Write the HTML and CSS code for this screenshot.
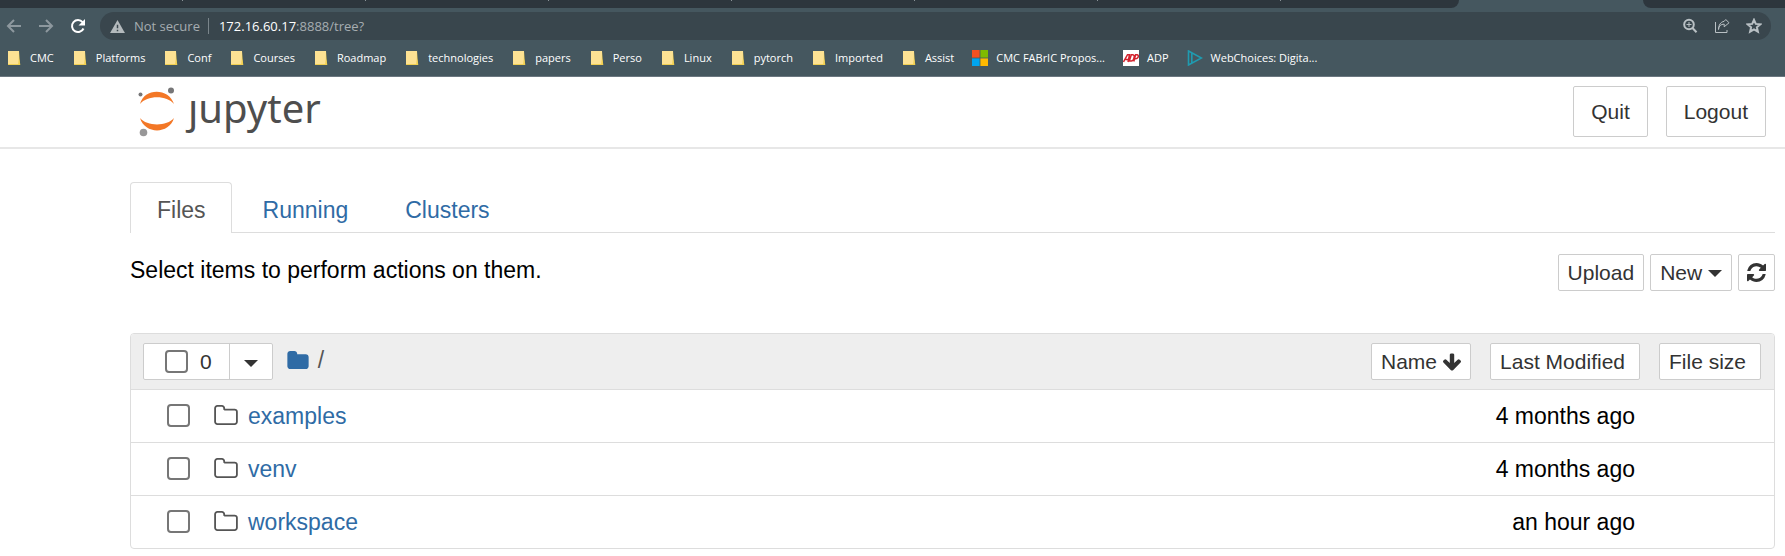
FILE: index.html
```html
<!DOCTYPE html>
<html lang="en">
<head>
<meta charset="utf-8">
<title>Home Page - Select or create a notebook</title>
<link rel="stylesheet" href="styles.css">
</head>
<body>
<svg class="defs" aria-hidden="true">
  <symbol id="mark" viewBox="0 0 16 16"><path fill="#fde293" d="M2 1h11v8l1 5.500H2z"/><path fill="#f0cf52" d="M2 14h12v1H2zM13 1l.6 8 .7 6H12l.8-6z"/></symbol>
  <symbol id="folder-o" viewBox="64 128 1664 1408"><path fill="currentColor" d="M1600 1312v-704q0-40-28-68t-68-28h-704q-40 0-68-28t-28-68v-64q0-40-28-68t-68-28h-320q-40 0-68 28t-28 68v960q0 40 28 68t68 28h1216q40 0 68-28t28-68zm128-704v704q0 92-66 158t-158 66h-1216q-92 0-158-66t-66-158v-960q0-92 66-158t158-66h320q92 0 158 66t66 158v32h672q92 0 158 66t66 158z"/></symbol>
</svg>

<div class="browser">
  <div class="tabstrip">
    <div class="tabs-left"><i></i><i></i><i></i><i></i><i></i><i></i><i></i></div>
    <div class="tabs-right"></div>
  </div>
  <div class="toolbar">
    <button class="nav dim" aria-label="Back"><svg viewBox="0 0 16 16"><path d="M15 8H2M8 2L2 8l6 6"/></svg></button>
    <button class="nav dim" aria-label="Forward"><svg viewBox="0 0 16 16"><path d="M1 8h13M8 2l6 6-6 6"/></svg></button>
    <button class="nav" aria-label="Reload"><svg viewBox="0 0 16 16"><path d="M13.500 10.500A6 6 0 1 1 12.600 4.200"/><path class="solid" d="M15 1v6.500H8.500z"/></svg></button>
    <div class="omnibox">
      <svg class="warn" viewBox="0 0 16 14"><path d="M8 0l8 14H0z"/><path class="bang" d="M7.200 5h1.600v4H7.200zM7.200 10.400h1.600V12H7.200z"/></svg>
      <span class="secure">Not secure</span>
      <span class="url"><b>172.16.60.17</b>:8888/tree?</span>
      <span class="actions">
        <button aria-label="Zoom"><svg viewBox="0 0 16 16"><circle cx="7" cy="6.500" r="4.800"/><path d="M10.500 10l4 4.200"/><path class="thin" d="M4.500 6.500h5M7 4v5"/></svg></button>
        <button aria-label="Share"><svg class="thin" viewBox="0 0 16 16"><path d="M1.500 4v10.500h11.500V12M4.500 11.500c.3-3.600 2.300-5.300 5.700-5.400v2.700L15 4.800 11.800 1.500l-1.600 1.800C6.500 4 4.600 7 4.500 11.500z"/></svg></button>
        <button aria-label="Bookmark"><svg viewBox="0 0 16 16"><path d="M8 1.800l1.800 4.100 4.500.4-3.400 3 1 4.400L8 11.400l-3.900 2.300 1-4.400-3.400-3 4.500-.4z"/></svg></button>
      </span>
    </div>
  </div>
  <nav class="bookmarks" aria-label="Bookmarks">
    <a href="#"><svg><use href="#mark"/></svg>CMC</a>
    <a href="#"><svg><use href="#mark"/></svg>Platforms</a>
    <a href="#"><svg><use href="#mark"/></svg>Conf</a>
    <a href="#"><svg><use href="#mark"/></svg>Courses</a>
    <a href="#"><svg><use href="#mark"/></svg>Roadmap</a>
    <a href="#"><svg><use href="#mark"/></svg>technologies</a>
    <a href="#"><svg><use href="#mark"/></svg>papers</a>
    <a href="#"><svg><use href="#mark"/></svg>Perso</a>
    <a href="#"><svg><use href="#mark"/></svg>Linux</a>
    <a href="#"><svg><use href="#mark"/></svg>pytorch</a>
    <a href="#"><svg><use href="#mark"/></svg>Imported</a>
    <a href="#"><svg><use href="#mark"/></svg>Assist</a>
    <a href="#"><svg viewBox="0 0 16 16"><path fill="#f25022" d="M0 0h7.600v7.600H0z"/><path fill="#7fba00" d="M8.400 0H16v7.600H8.400z"/><path fill="#00a4ef" d="M0 8.400h7.600V16H0z"/><path fill="#ffb900" d="M8.400 8.400H16V16H8.400z"/></svg>CMC FABrIC Propos...</a>
    <a href="#"><svg viewBox="0 0 16 16"><path fill="#fff" d="M0 0h16v16H0z"/><path fill="none" stroke="#d3232e" stroke-width="1.500" d="M.5 12l4-7.300h2L5 12M2.500 9.500h3M6.300 11l2-6.200h1.500q2 .3 1.200 3-.7 3.200-2.700 3.200zM10.800 11.500l1.800-6.700h1.600q1.800.5.800 2.600-.8 1.600-3 1.300"/></svg>ADP</a>
    <a href="#"><svg viewBox="0 0 16 16"><path fill="none" stroke="#1f9bb0" stroke-width="1.600" d="M1.500 1l13 7-13 7zM4.800 3v9.800"/></svg>WebChoices: Digita...</a>
  </nav>
</div>

<header class="header">
  <a class="logo" href="#" aria-label="jupyter">
    <svg viewBox="0 0 38 50"><path fill="#f37726" d="M2 17C6 .5 31 .5 36 17 29 8 9 8 2 17zM2 31c5 16.500 29 16.500 34 0-7 8.500-27 8.500-34 0z"/><circle cx="2.500" cy="7.500" r="2" fill="#767677"/><circle cx="33" cy="3.500" r="3" fill="#767677"/><circle cx="5.500" cy="45.500" r="3.800" fill="#989798"/></svg>
    <span>ȷupyter</span>
  </a>
  <div class="session">
    <button class="btn large">Quit</button>
    <button class="btn large">Logout</button>
  </div>
</header>

<main class="page">
  <nav class="tabs">
    <a class="active" href="#">Files</a>
    <a href="#">Running</a>
    <a href="#">Clusters</a>
  </nav>
  <div class="actions-row">
    <p>Select items to perform actions on them.</p>
    <div class="tools">
      <button class="btn">Upload</button>
      <button class="btn">New <span class="caret"></span></button>
      <button class="btn refresh" aria-label="Refresh"><svg viewBox="128 128 1536 1536"><path fill="currentColor" d="M1639 1056q0 5-1 7-64 268-268 434.500t-478 166.500q-146 0-282.500-55t-243.500-157l-129 129q-19 19-45 19t-45-19-19-45v-448q0-26 19-45t45-19h448q26 0 45 19t19 45-19 45l-137 137q71 66 161 102t187 36q134 0 250-65t186-179q11-17 53-117 8-23 30-23h192q13 0 22.500 9.500t9.500 22.500zm25-800v448q0 26-19 45t-45 19h-448q-26 0-45-19t-19-45 19-45l138-138q-148-137-349-137-134 0-250 65t-186 179q-11 17-53 117-8 23-30 23h-199q-13 0-22.500-9.500t-9.500-22.500v-7q65-268 270-434.500t480-166.500q146 0 284 55.500t245 156.500l130-129q19-19 45-19t45 19 19 45z"/></svg></button>
    </div>
  </div>

  <div class="list">
    <table>
      <thead>
        <tr>
          <th class="name">
            <div class="list-head">
              <div class="select-all">
                <label><input type="checkbox" aria-label="Select all"><span>0</span></label>
                <button aria-label="Select by type"><span class="caret"></span></button>
              </div>
              <div class="crumbs"><a href="#" aria-label="Root folder"><svg viewBox="64 128 1664 1408"><path fill="currentColor" d="M1728 608v704q0 92-66 158t-158 66h-1216q-92 0-158-66t-66-158v-960q0-92 66-158t158-66h320q92 0 158 66t66 158v32h672q92 0 158 66t66 158z"/></svg></a><span>/</span></div>
              <button class="btn sort">Name <svg viewBox="117 128 1558 1483"><path fill="currentColor" d="M1675 832q0 53-37 90l-651 652q-39 37-91 37-53 0-90-37l-651-652q-38-36-38-90 0-53 38-91l74-75q39-37 91-37 53 0 90 37l294 294v-704q0-52 38-90t90-38h128q52 0 90 38t38 90v704l294-294q37-37 90-37 52 0 91 37l75 75q37 39 37 91z"/></svg></button>
            </div>
          </th>
          <th class="modified"><button class="btn roomy">Last Modified</button></th>
          <th class="size"><button class="btn roomy">File size</button></th>
        </tr>
      </thead>
      <tbody>
        <tr><td><div class="item"><input type="checkbox" aria-label="Select examples"><svg><use href="#folder-o"/></svg><a href="#">examples</a></div></td><td class="when">4 months ago</td><td></td></tr>
        <tr><td><div class="item"><input type="checkbox" aria-label="Select venv"><svg><use href="#folder-o"/></svg><a href="#">venv</a></div></td><td class="when">4 months ago</td><td></td></tr>
        <tr><td><div class="item"><input type="checkbox" aria-label="Select workspace"><svg><use href="#folder-o"/></svg><a href="#">workspace</a></div></td><td class="when">an hour ago</td><td></td></tr>
      </tbody>
    </table>
  </div>
</main>
</body>
</html>
```
FILE: styles.css
```css
* { box-sizing: border-box; }
body {
  margin: 0;
  background: #fff;
  color: #000;
  font: 23px/32px "Liberation Sans", Arial, sans-serif;
}
a { color: #2f6ba5; text-decoration: none; }
button { font: inherit; color: inherit; margin: 0; cursor: pointer; }
svg { display: block; flex: none; }
.defs { position: absolute; width: 0; height: 0; }

/* Browser frame */
.browser {
  background: #45575f;
  border-bottom: 1px solid #6b7780;
  font: 13px/20px "Open Sans", "Noto Sans", sans-serif;
  color: #fff;
}
.tabstrip { display: flex; gap: 184px; height: 8px; }
.tabs-left { flex: 1; display: flex; background: #2d363d; border-bottom-right-radius: 8px; }
.tabs-left i { width: 183px; height: 1px; border-right: 1px solid #8a9297; }
.tabs-right { width: 142px; background: #2d363d; border-bottom-left-radius: 8px; }

.toolbar { display: flex; align-items: center; gap: 16px; padding: 4px 14px 0 6px; }
.nav { padding: 0; border: 0; background: none; }
.nav svg { width: 16px; height: 16px; fill: none; stroke: #fff; stroke-width: 2; }
.nav .solid { fill: #fff; stroke: none; }
.nav.dim svg { stroke: #8d989e; }
.omnibox {
  flex: 1;
  display: flex;
  align-items: center;
  height: 28px;
  margin-left: -2px;
  padding: 0 9px 0 10px;
  border-radius: 14px;
  background: #39464d;
  color: #a6adb1;
}
.warn { width: 15px; height: 13px; fill: #b4babd; }
.warn .bang { fill: #39464d; }
.secure { margin-left: 9px; padding-right: 8px; }
.url { border-left: 1px solid #7a858b; padding-left: 10px; line-height: 16px; }
.url b { font-weight: 400; color: #fff; }
.actions { display: flex; gap: 16px; margin-left: auto; }
.actions button { padding: 0; border: 0; background: none; }
.actions svg { width: 16px; height: 16px; fill: none; stroke: #b9c0c4; stroke-width: 2; }
.actions .thin { stroke-width: 1; }

.bookmarks { display: flex; gap: 18px; height: 36px; padding: 0 6px; align-items: center; font-size: 11px; }
.bookmarks a { display: flex; align-items: center; gap: 8px; color: #fff; white-space: nowrap; }
.bookmarks svg { width: 16px; height: 16px; }

/* Jupyter header */
.header {
  display: flex;
  align-items: center;
  justify-content: space-between;
  height: 72px;
  padding: 0 19px 1px 138px;
  border-bottom: 2px solid #e7e7e7;
}
.logo {
  display: flex;
  align-items: flex-start;
  gap: 12px;
  color: #4e4e4e;
  font: 40px/42px "Noto Sans", sans-serif;
}
.logo svg { width: 38px; height: 50px; }
.session { display: flex; gap: 18px; }
.btn {
  height: 37px;
  padding: 0 9px;
  border: 1px solid #ccc;
  border-radius: 2px;
  background: #fff;
  color: #333;
  font-size: 21px;
  line-height: 32px;
  white-space: nowrap;
}
.btn.large { height: 51px; padding: 0 17px; }
.caret {
  display: inline-block;
  border: 7px solid transparent;
  border-top-color: #333;
  border-bottom: 0;
  vertical-align: middle;
}

/* Page body */
.page { padding: 33px 10px 0 130px; }
.tabs { display: flex; gap: 4px; border-bottom: 1px solid #ddd; }
.tabs a { padding: 11px 25px 6px 26px; border: 1px solid transparent; border-bottom: 0; }
.tabs .active {
  margin-bottom: -1px;
  padding-bottom: 7px;
  border-color: #ddd;
  border-radius: 4px 4px 0 0;
  background: #fff;
  color: #555;
}
.actions-row { display: flex; justify-content: space-between; align-items: flex-start; padding-top: 21px; }
.actions-row p { margin: 0; }
.tools { display: flex; gap: 6px; }
.refresh { padding: 0 8px; }
.refresh svg { width: 19px; height: 19px; }

.list { margin-top: 42px; border: 1px solid #ddd; border-radius: 4px; overflow: hidden; }
table { width: 100%; border-collapse: collapse; }
th, td { padding: 0; font-weight: 400; }
th { height: 55px; padding-top: 1px; background: #eee; }
.modified { width: 169px; text-align: right; }
.size { width: 134px; text-align: left; padding-left: 19px; }
.roomy { padding-right: 14px; }
td { height: 53px; border-top: 1px solid #ddd; }
.when { padding-right: 5px; text-align: right; }
.list-head { display: flex; align-items: center; padding-left: 12px; }
.select-all {
  display: flex;
  height: 37px;
  border: 1px solid #ccc;
  border-radius: 2px;
  background: #fff;
  color: #333;
  font-size: 21px;
}
.select-all label { display: flex; align-items: center; gap: 12px; padding: 0 17px 0 21px; }
.select-all button { width: 43px; padding: 0; border: 0; border-left: 1px solid #ccc; background: none; }
input[type="checkbox"] {
  appearance: none;
  width: 23px;
  height: 23px;
  margin: 0;
  border: 2px solid #767676;
  border-radius: 4px;
  background: #fff;
}
.crumbs { display: flex; align-items: center; gap: 9px; padding: 0 0 4px 14px; color: #555; }
.crumbs svg { width: 22px; height: 18px; }
.sort { display: flex; align-items: center; gap: 6px; margin-left: auto; }
.sort svg { width: 18px; height: 18px; }
.item { display: flex; align-items: center; padding-left: 36px; }
.item svg { width: 24px; height: 20px; margin: 0 10px 2px 24px; color: #555; }
```
